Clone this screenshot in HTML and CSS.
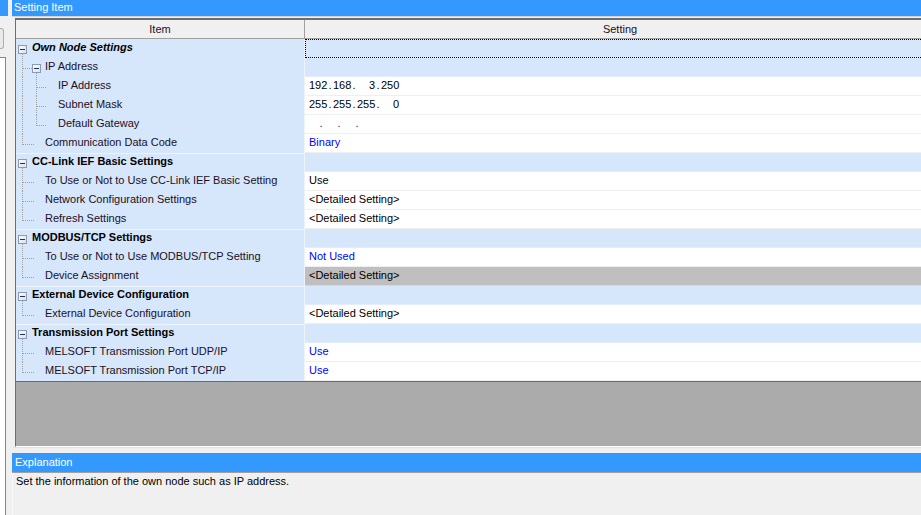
FILE: index.html
```html
<!DOCTYPE html>
<html>
<head>
<meta charset="utf-8">
<title>Setting Item</title>
<link rel="stylesheet" href="styles.css">
</head>
<body>
<svg class="defs" width="0" height="0" aria-hidden="true">
  <defs>
    <linearGradient id="bx" x1="0" y1="0" x2="1" y2="1">
      <stop offset="0" stop-color="#ffffff"/>
      <stop offset="1" stop-color="#d9dee6"/>
    </linearGradient>
    <symbol id="cat" viewBox="0 0 16 19">
      <rect x="2.5" y="6.5" width="8" height="8" fill="url(#bx)" stroke="#8d9bb2"/>
      <path d="M4 10.5h5" stroke="#1d2f6b"/>
      <path d="M6.5 15V19" stroke="#a0a0a0" stroke-dasharray="1 1"/>
    </symbol>
    <symbol id="l1" viewBox="0 0 29 19">
      <path d="M6.5 0V19M7 10.5H18" stroke="#a0a0a0" stroke-dasharray="1 1"/>
    </symbol>
    <symbol id="l1last" viewBox="0 0 29 19">
      <path d="M6.5 0V11M7 10.5H18" stroke="#a0a0a0" stroke-dasharray="1 1"/>
    </symbol>
    <symbol id="l1box" viewBox="0 0 29 19">
      <path d="M6.5 0V19M7 10.5H16M20.5 15V19" stroke="#a0a0a0" stroke-dasharray="1 1"/>
      <rect x="16.5" y="6.5" width="8" height="8" fill="url(#bx)" stroke="#8d9bb2"/>
      <path d="M18 10.5h5" stroke="#1d2f6b"/>
    </symbol>
    <symbol id="l2" viewBox="0 0 42 19">
      <path d="M6.5 0V19M20.5 0V19M21 10.5H31" stroke="#a0a0a0" stroke-dasharray="1 1"/>
    </symbol>
    <symbol id="l2last" viewBox="0 0 42 19">
      <path d="M6.5 0V19M20.5 0V11M21 10.5H31" stroke="#a0a0a0" stroke-dasharray="1 1"/>
    </symbol>
  </defs>
</svg>

<div class="side">
  <div class="side-bar"></div>
  <div class="side-btn"></div>
  <div class="side-panel"></div>
</div>

<div class="main">
  <div class="titlebar">Setting Item</div>
  <div class="grid">
    <div class="head">
      <div class="hitem">Item</div>
      <div class="hset">Setting</div>
    </div>

    <div class="row">
      <div class="item"><svg class="t0"><use href="#cat"/></svg><span class="lbl cat-lbl own">Own Node Settings</span></div>
      <div class="set cat focus"></div>
    </div>
    <div class="row">
      <div class="item"><svg class="t1"><use href="#l1box"/></svg><span class="lbl">IP Address</span></div>
      <div class="set cat"></div>
    </div>
    <div class="row">
      <div class="item"><svg class="t2"><use href="#l2"/></svg><span class="lbl">IP Address</span></div>
      <div class="set"><span class="ip"><span class="oct">192</span><span class="dot">.</span><span class="oct">168</span><span class="dot">.</span><span class="oct">3</span><span class="dot">.</span><span class="oct">250</span></span></div>
    </div>
    <div class="row">
      <div class="item"><svg class="t2"><use href="#l2"/></svg><span class="lbl">Subnet Mask</span></div>
      <div class="set"><span class="ip"><span class="oct">255</span><span class="dot">.</span><span class="oct">255</span><span class="dot">.</span><span class="oct">255</span><span class="dot">.</span><span class="oct">0</span></span></div>
    </div>
    <div class="row">
      <div class="item"><svg class="t2"><use href="#l2last"/></svg><span class="lbl">Default Gateway</span></div>
      <div class="set"><span class="gw"><span class="gdot">.</span><span class="gdot">.</span><span class="gdot">.</span></span></div>
    </div>
    <div class="row">
      <div class="item"><svg class="t1"><use href="#l1last"/></svg><span class="lbl">Communication Data Code</span></div>
      <div class="set blue">Binary</div>
    </div>

    <div class="row">
      <div class="item sep"><svg class="t0"><use href="#cat"/></svg><span class="lbl cat-lbl">CC-Link IEF Basic Settings</span></div>
      <div class="set cat"></div>
    </div>
    <div class="row">
      <div class="item"><svg class="t1"><use href="#l1"/></svg><span class="lbl">To Use or Not to Use CC-Link IEF Basic Setting</span></div>
      <div class="set">Use</div>
    </div>
    <div class="row">
      <div class="item"><svg class="t1"><use href="#l1"/></svg><span class="lbl">Network Configuration Settings</span></div>
      <div class="set">&lt;Detailed Setting&gt;</div>
    </div>
    <div class="row">
      <div class="item"><svg class="t1"><use href="#l1last"/></svg><span class="lbl">Refresh Settings</span></div>
      <div class="set">&lt;Detailed Setting&gt;</div>
    </div>

    <div class="row">
      <div class="item sep"><svg class="t0"><use href="#cat"/></svg><span class="lbl cat-lbl">MODBUS/TCP Settings</span></div>
      <div class="set cat"></div>
    </div>
    <div class="row">
      <div class="item"><svg class="t1"><use href="#l1"/></svg><span class="lbl">To Use or Not to Use MODBUS/TCP Setting</span></div>
      <div class="set blue">Not Used</div>
    </div>
    <div class="row">
      <div class="item"><svg class="t1"><use href="#l1last"/></svg><span class="lbl">Device Assignment</span></div>
      <div class="set sel">&lt;Detailed Setting&gt;</div>
    </div>

    <div class="row">
      <div class="item sep"><svg class="t0"><use href="#cat"/></svg><span class="lbl cat-lbl">External Device Configuration</span></div>
      <div class="set cat"></div>
    </div>
    <div class="row">
      <div class="item"><svg class="t1"><use href="#l1last"/></svg><span class="lbl">External Device Configuration</span></div>
      <div class="set">&lt;Detailed Setting&gt;</div>
    </div>

    <div class="row">
      <div class="item sep"><svg class="t0"><use href="#cat"/></svg><span class="lbl cat-lbl">Transmission Port Settings</span></div>
      <div class="set cat"></div>
    </div>
    <div class="row">
      <div class="item"><svg class="t1"><use href="#l1"/></svg><span class="lbl">MELSOFT Transmission Port UDP/IP</span></div>
      <div class="set blue">Use</div>
    </div>
    <div class="row">
      <div class="item"><svg class="t1"><use href="#l1last"/></svg><span class="lbl">MELSOFT Transmission Port TCP/IP</span></div>
      <div class="set blue">Use</div>
    </div>

    <div class="empty"></div>
  </div>
  <div class="splitline"></div>
  <div class="explbar">Explanation</div>
  <div class="expl">Set the information of the own node such as IP address.</div>
</div>
</body>
</html>
```
FILE: styles.css
```css
html, body {
  margin: 0;
  padding: 0;
}
body {
  width: 921px;
  height: 515px;
  overflow: hidden;
  background: #f0f0f0;
  display: flex;
  font-family: "Liberation Sans", Arial, sans-serif;
  font-size: 11px;
  color: #000;
}
.defs {
  position: absolute;
  width: 0;
  height: 0;
}

/* left neighbour pane */
.side {
  width: 12px;
  flex: none;
  display: flex;
  flex-direction: column;
  overflow: hidden;
}
.side-bar {
  width: 8px;
  height: 16px;
  background: #3399ff;
}
.side-btn {
  margin-top: 12px;
  width: 3px;
  height: 19px;
  border: 1px solid #adadad;
  border-left: none;
  border-radius: 0 3px 3px 0;
  background: #e9e9e9;
}
.side-panel {
  margin-top: 8px;
  width: 5px;
  flex: 1;
  background: #ffffff;
  border-top: 1px solid #828790;
  border-right: 1px solid #828790;
}

/* main pane */
.main {
  flex: 1;
  display: flex;
  flex-direction: column;
  min-width: 0;
}
.titlebar {
  height: 16px;
  line-height: 15px;
  background: #3399ff;
  color: #ffffff;
  padding-left: 2px;
  border-bottom: 1px solid #d4d4d4;
}
.grid {
  margin-top: 1px;
  margin-left: 3px;
  height: 426px;
  border-top: 2px solid #6d6d6d;
  border-left: 1px solid #6d6d6d;
  border-bottom: 1px solid #ffffff;
  display: flex;
  flex-direction: column;
  overflow: hidden;
  background: #ababab;
}
.head {
  display: flex;
  height: 18px;
  flex: none;
  border-bottom: 1px solid #a0a0a0;
  background: #f0f0f0;
  color: #1c0f26;
  line-height: 18px;
}
.hitem {
  width: 288px;
  flex: none;
  text-align: center;
  border-right: 1px solid #a0a0a0;
}
.hset {
  width: 630px;
  flex: none;
  text-align: center;
}

.row {
  display: flex;
  height: 19px;
  flex: none;
}
.item {
  width: 288px;
  flex: none;
  height: 19px;
  background: #d6e6fb;
  border-right: 1px solid #eef3fa;
  display: flex;
  align-items: center;
  color: #1c0f26;
  white-space: nowrap;
}
.item.sep {
  box-shadow: inset 0 1px 0 #eef4fd;
}
.t0 {
  width: 16px;
  height: 19px;
  flex: none;
}
.t1 {
  width: 29px;
  height: 19px;
  flex: none;
}
.t2 {
  width: 42px;
  height: 19px;
  flex: none;
}
.lbl {
  line-height: 17px;
  align-self: flex-start;
}
.cat-lbl {
  font-weight: bold;
  color: #000;
}
.own {
  font-style: italic;
}

.set {
  width: 626px;
  flex: none;
  height: 18px;
  line-height: 17px;
  padding-left: 4px;
  background: #ffffff;
  border-bottom: 1px solid #efefef;
  white-space: nowrap;
}
.set.cat {
  background: #d6e6fb;
  border-bottom-color: #e3edfb;
}
.set.sel {
  background: #bfbfbf;
  border-bottom-color: #d8d8d8;
}
.set.focus {
  outline: 1px dotted #000;
  outline-offset: -1px;
}
.blue {
  color: #0000ff;
}

.ip {
  display: inline-flex;
}
.oct {
  display: inline-block;
  width: 18px;
  text-align: right;
}
.dot {
  display: inline-block;
  width: 6px;
  text-align: center;
}
.gw {
  display: inline-flex;
  margin-left: 3px;
  color: #24168a;
}
.gdot {
  display: inline-block;
  width: 18px;
  text-align: center;
}

.empty {
  flex: 1;
  background: #ababab;
  border-top: 1px solid #6a6a6a;
}

.splitline {
  height: 0;
  margin-top: 0;
  border-top: 1px solid #e1e1e1;
  margin-left: 1px;
}
.explbar {
  margin-top: 5px;
  height: 19px;
  line-height: 19px;
  background: #3399ff;
  color: #ffffff;
  padding-left: 3px;
  border-bottom: 1px solid #a0a0a0;
}
.expl {
  flex: 1;
  padding: 1px 3px;
  line-height: 14px;
  border-left: 1px solid #f8f8f8;
}
```
